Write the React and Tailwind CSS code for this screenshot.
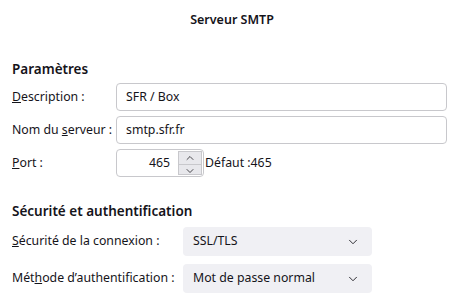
import { ChevronDown, ChevronUp } from 'lucide-react'

function Field({ label, children }) {
  return (
    <div className="flex items-center h-[28px]">
      <div className="w-[104px] shrink-0 whitespace-nowrap">{label}</div>
      {children}
    </div>
  )
}

export default function App() {
  return (
    <div className="w-[464px] h-[296px] bg-white text-[#15141a] text-[12.3px] overflow-hidden" style={{ fontFamily: '"Noto Sans", "Open Sans", sans-serif' }}>
      <div className="h-[40px] flex items-center justify-center font-semibold text-[12.5px]">Serveur SMTP</div>

      <div className="px-3 pt-[19px]">
        <h2 className="font-semibold text-[13.5px] leading-[20px] mb-[4px]">Paramètres</h2>
        <div className="flex flex-col gap-[5px] pr-[5px]">
          <Field label={<span><u>D</u>escription :</span>}>
            <div className="flex-1 h-[28px] border border-[#c8c8cc] rounded-[4px] flex items-center px-[9px]">SFR / Box</div>
          </Field>
          <Field label={<span>Nom du <u>s</u>erveur :</span>}>
            <div className="flex-1 h-[28px] border border-[#c8c8cc] rounded-[4px] flex items-center px-[9px]">smtp.sfr.fr</div>
          </Field>
          <Field label={<span><u>P</u>ort :</span>}>
            <div className="w-[88px] h-[28px] border border-[#c8c8cc] rounded-[4px] flex items-center">
              <div className="flex-1 text-right pr-[8px]">465</div>
              <div className="w-[24px] h-[24px] mr-[1px] bg-[#e8e8ec] border border-[#c8c8cc] flex flex-col">
                <div className="flex-1 flex items-center justify-center border-b border-[#c8c8cc]"><ChevronUp size={12} strokeWidth={1.5} /></div>
                <div className="flex-1 flex items-center justify-center"><ChevronDown size={12} strokeWidth={1.5} /></div>
              </div>
            </div>
            <span className="ml-[1px] whitespace-nowrap">Défaut :465</span>
          </Field>
        </div>

        <h2 className="font-semibold text-[13.5px] leading-[20px] mt-[24px] mb-[6px]">Sécurité et authentification</h2>
        <div className="flex flex-col gap-[8px]">
          <div className="flex items-center h-[29px]">
            <div className="w-[171px] shrink-0 whitespace-nowrap"><u>S</u>écurité de la connexion :</div>
            <div className="w-[189px] h-[29px] bg-[#f0f0f4] rounded-[4px] flex items-center justify-between pl-[10px] pr-[12px]">
              <span>SSL/TLS</span>
              <ChevronDown size={14} strokeWidth={1.5} />
            </div>
          </div>
          <div className="flex items-center h-[29px]">
            <div className="w-[171px] shrink-0 whitespace-nowrap">Mét<u>h</u>ode d’authentification :</div>
            <div className="w-[189px] h-[29px] bg-[#f0f0f4] rounded-[4px] flex items-center justify-between pl-[10px] pr-[12px]">
              <span>Mot de passe normal</span>
              <ChevronDown size={14} strokeWidth={1.5} />
            </div>
          </div>
        </div>
      </div>
    </div>
  )
}
